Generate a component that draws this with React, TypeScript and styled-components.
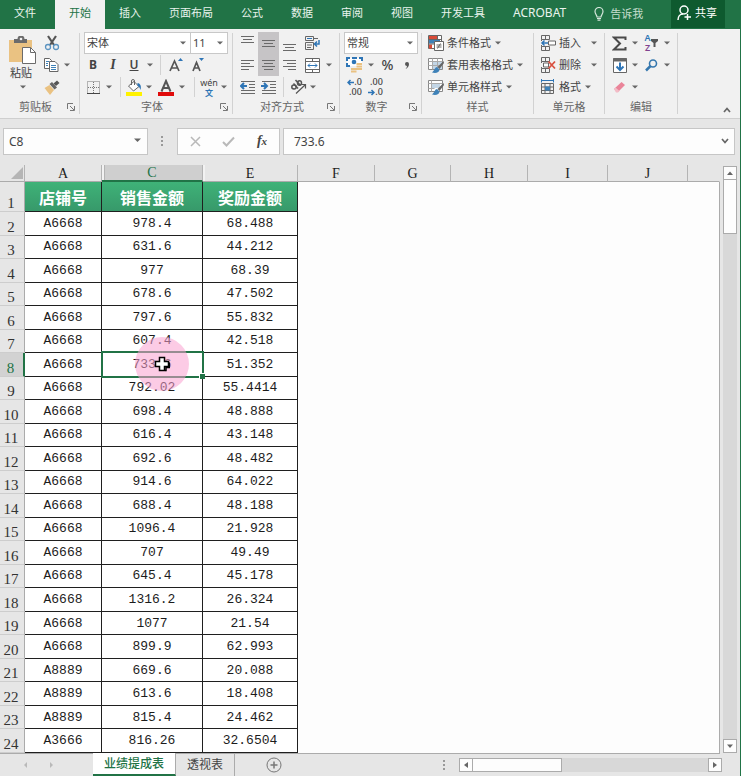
import React from "react";
import styled, { createGlobalStyle, css } from "styled-components";

const UI = `"Noto Sans", "Noto Sans CJK SC", sans-serif`;
const GREEN = "#217346";
const INK = "#444444";
const LINE = "#ababab";

const Global = createGlobalStyle`
  *, *::before, *::after { box-sizing: border-box; }
  body { margin: 0; background: #e6e6e6; color: ${INK}; font: 11px/16px ${UI}; }
  button, input, select { font: inherit; color: inherit; margin: 0; padding: 0; border: 0; background: none; border-radius: 0; }
  svg { display: block; flex: none; }
`;

const Window = styled.div`
  display: flex;
  flex-direction: column;
  height: 100vh;
  min-height: 640px;
  overflow: hidden;
`;

/* ---------- tab strip ---------- */
const TabStrip = styled.nav`
  display: flex;
  height: 29px;
  background: ${GREEN};
  color: #e9f3ed;
`;
const RibbonTab = styled.button<{ $active?: boolean; $file?: boolean; $latin?: boolean }>`
  height: 29px;
  padding: 0 14px 3px;
  white-space: nowrap;
  ${(p) => p.$file && css`width: 55px; padding-right: 19px;`}
  ${(p) => p.$latin && css`font-size: 12px;`}
  ${(p) => p.$active && css`background: #f1f1f1; color: ${GREEN};`}
`;
const TellMe = styled.button`
  display: flex;
  align-items: center;
  gap: 6px;
  margin-left: 14px;
  padding: 0 0 2px;
  color: #c5dece;
  white-space: nowrap;
`;
const Share = styled.button`
  display: flex;
  align-items: center;
  gap: 3px;
  height: 28px;
  margin: 0 16px 0 auto;
  padding: 0 8px 3px 6px;
  background: #0e5a2f;
  color: #ffffff;
  white-space: nowrap;
`;

/* ---------- ribbon ---------- */
const Framed = styled.div`
  display: flex;
  flex: 1;
  flex-direction: column;
  min-height: 0;
  border-right: 1px solid ${GREEN};
`;
const Ribbon = styled.div`
  display: flex;
  flex: none;
  height: 90px;
  background: #f1f1f1;
  border-bottom: 1px solid #cfcfcf;
`;
const Group = styled.section<{ $w: number }>`
  display: flex;
  flex: none;
  flex-direction: column;
  width: ${(p) => p.$w}px;
  padding: 3px 0 0 4px;
  background: linear-gradient(#d2d2d2, #d2d2d2) right 4px / 1px 81px no-repeat;
`;
const Tools = styled.div`
  display: flex;
  height: 65px;
`;
const Stack = styled.div`
  display: flex;
  flex-direction: column;
`;
const Row = styled.div`
  display: flex;
  align-items: center;
  height: 22px;
`;
const Tool = styled.button<{ $w?: number; $on?: boolean }>`
  display: flex;
  flex: none;
  align-items: center;
  justify-content: center;
  width: ${(p) => p.$w ?? 21}px;
  height: 22px;
  background: ${(p) => (p.$on ? "#c6c4c6" : "none")};
`;
const Letter = styled.span<{ $k: "b" | "i" | "u" | "sign" }>`
  font: 700 12px/16px "Noto Sans", sans-serif;
  ${(p) => p.$k === "i" && css`font: italic 700 14px/16px "Liberation Serif", serif;`}
  ${(p) => p.$k === "u" && css`font-weight: 600; text-decoration: underline;`}
  ${(p) => p.$k === "sign" && css`font-size: 14px; font-weight: 500;`}
`;
const Divider = styled.span<{ $w: number }>`
  width: ${(p) => p.$w}px;
  height: 20px;
  background: linear-gradient(#d2d2d2, #d2d2d2) center / 1px 100% no-repeat;
`;
const TextTool = styled.button<{ $w?: number }>`
  display: flex;
  align-items: center;
  gap: 2px;
  height: 22px;
  width: ${(p) => (p.$w ? `${p.$w}px` : "auto")};
  white-space: nowrap;
  & > svg:last-child { margin-left: ${(p) => (p.$w ? "auto" : "2px")}; }
`;
const IconSlot = styled.span`
  width: 19px;
  padding-left: 2px;
`;
const PasteButton = styled.button`
  display: flex;
  flex-direction: column;
  align-items: center;
  width: 37px;
  padding: 4px 0 0 1px;
  & > svg:last-child { margin-top: 4px; }
`;
const PasteLabel = styled.span`
  padding-right: 4px;
`;
const Caption = styled.div`
  display: grid;
  grid-template-columns: 1fr auto;
  align-items: center;
  height: 20px;
  padding-right: 5px;
  color: #666666;
  text-align: center;
`;
const Collapse = styled.button`
  align-self: flex-end;
  margin: 0 9px 5px auto;
`;
const Picker = styled.span<{ $w: number }>`
  display: grid;
  flex: none;
  align-items: center;
  width: ${(p) => p.$w}px;
  height: 22px;
  background: #ffffff;
  border: 1px solid #c8c8c8;
  & + & { border-left: 0; }
  & > select { grid-area: 1 / 1; height: 20px; padding-left: 2px; appearance: none; outline: none; }
  & > svg { grid-area: 1 / 1; justify-self: end; margin-right: 4px; pointer-events: none; }
`;

/* ---------- formula bar ---------- */
const FormulaBar = styled.div`
  display: flex;
  flex: none;
  align-items: center;
  height: 46px;
  padding: 0 5px 2px 3px;
  font-size: 12px;
`;
const Field = styled.div<{ $w?: number }>`
  display: flex;
  flex: ${(p) => (p.$w ? "none" : "1")};
  align-items: center;
  justify-content: space-between;
  width: ${(p) => (p.$w ? `${p.$w}px` : "auto")};
  height: 27px;
  padding: 0 5px;
  background: #fdfdfd;
  border: 1px solid #c6c6c6;
  & > input { flex: 1; min-width: 0; height: 24px; padding-left: ${(p) => (p.$w ? 0 : 5)}px; outline: none; }
`;
const Grip = styled.span<{ $w: number }>`
  display: flex;
  flex: none;
  justify-content: center;
  width: ${(p) => p.$w}px;
`;
const Fx = styled.span`
  font: italic 700 14px/16px "Liberation Serif", serif;
  & > small { font-size: 11px; }
`;

/* ---------- sheet ---------- */
const Work = styled.main`
  display: flex;
  flex: 1;
  min-height: 0;
`;
const Sheet = styled.div`
  flex: 1;
  min-width: 0;
`;
const Grid = styled.table`
  width: 100%;
  height: 100%;
  table-layout: fixed;
  border-collapse: separate;
  border-spacing: 0;
  color: #1c1c1c;
`;
const ColHead = styled.th<{ $on?: boolean; $last?: boolean }>`
  height: 17px;
  padding: 1px 0 0;
  border-right: 1px solid ${(p) => (p.$last ? "transparent" : "#b4b4b4")};
  border-bottom: 1px solid ${LINE};
  font: 400 14px/15px "Liberation Serif", serif;
  ${(p) => p.$on && css`
    background: #cfcfcf;
    color: ${GREEN};
    border-bottom: 2px solid ${GREEN};
    line-height: 14px;
    box-shadow: inset 2px 0 #f2f2f2, inset 3px 0 #b4b4b4, 2px 0 #f2f2f2;
  `}
`;
const Corner = styled.td`
  padding: 0;
  border-right: 1px solid #b4b4b4;
  border-bottom: 1px solid ${LINE};
  & > svg { margin-left: 11px; }
`;
const RowHead = styled.th<{ $on?: boolean }>`
  padding: 0 2px 0 0;
  vertical-align: bottom;
  border-right: 1px solid ${LINE};
  border-bottom: 1px solid #cdcdcd;
  font: 400 15px/16px "Liberation Serif", serif;
  color: #333333;
  ${(p) => p.$on && css`
    background: #d2d2d2;
    color: ${GREEN};
    border-right: 2px solid ${GREEN};
  `}
`;
const Title = styled.td`
  height: 30px;
  padding: 0;
  background: linear-gradient(#3fb278, #37996a);
  border-right: 1px solid #1f1f1f;
  border-bottom: 1px solid #1f1f1f;
  color: #ffffff;
  font: 700 16px/20px "Noto Sans CJK SC", sans-serif;
  text-align: center;
`;
const Cell = styled.td`
  position: relative;
  padding: 1px 0 0;
  background: #ffffff;
  border-right: 1px solid #1f1f1f;
  border-bottom: 1px solid #1f1f1f;
  font: 13px/20px "Liberation Mono", monospace;
  text-align: center;
`;
const Blank = styled.td`
  padding: 0;
  background: #fdfdfd;
  border-right: 1px solid ${LINE};
`;
const Selection = styled.span`
  position: absolute;
  z-index: 1;
  inset: -2px -2px -2px -1px;
  border: 2px solid ${GREEN};
  &::after {
    content: "";
    position: absolute;
    right: -3px;
    bottom: -3px;
    width: 6px;
    height: 6px;
    background: ${GREEN};
    border: 1px solid #ffffff;
    border-width: 1px 0 0 1px;
  }
`;
const Pointer = styled.span`
  position: absolute;
  z-index: 2;
  top: 50%;
  left: 60%;
  display: grid;
  place-items: center;
  width: 54px;
  height: 54px;
  margin: -27px;
  border-radius: 50%;
  background: rgba(250, 160, 208, 0.55);
`;

/* ---------- scroll bars and sheet tabs ---------- */
const VScroll = styled.div`
  display: flex;
  flex: none;
  flex-direction: column;
  width: 14px;
  margin: 1px 3px 0 3px;
  background: #d8d8d8;
`;
const HScroll = styled.div`
  display: flex;
  flex: none;
  width: 263px;
  height: 14px;
  margin-right: 18px;
  background: #d8d8d8;
`;
const Arrow = styled.button`
  display: grid;
  flex: none;
  place-items: center;
  width: 14px;
  height: 14px;
  background: #fdfdfd;
  border: 1px solid ${LINE};
`;
const Thumb = styled.div<{ $v?: boolean }>`
  background: #fdfdfd;
  border: 1px solid ${LINE};
  ${(p) => (p.$v ? css`height: 54px; border-top: 0;` : css`width: 89px; border-left: 0;`)}
`;
const Spring = styled.span`
  flex: 1;
`;
const Footer = styled.footer`
  display: flex;
  flex: none;
  align-items: center;
  height: 22px;
  font-size: 12px;
`;
const FooterLine = styled.div`
  flex: none;
  height: 1px;
  margin-right: 20px;
  background: ${LINE};
`;
const SheetNav = styled.div`
  display: flex;
  gap: 18px;
  width: 93px;
  padding-left: 22px;
`;
const SheetTab = styled.button<{ $active?: boolean }>`
  align-self: stretch;
  padding: 0 11px;
  white-space: nowrap;
  border-right: 1px solid ${LINE};
  ${(p) => p.$active && css`
    margin-top: -1px;
    background: #ffffff;
    color: ${GREEN};
    border-bottom: 2px solid ${GREEN};
    font-weight: 500;
  `}
`;
const AddSheet = styled.button`
  margin-left: 31px;
`;

/* ---------- drawings ---------- */
const Caret = () => (
  <svg width="6" height="4" viewBox="0 0 6 4"><path d="M0 .5h6L3 3.5z" fill="#666" /></svg>
);
const Triangle = ({ d, fill = "#666" }: { d: string; fill?: string }) => (
  <svg width="8" height="8" viewBox="0 0 8 8"><path d={d} fill={fill} /></svg>
);
const Launcher = () => (
  <svg width="8" height="8" viewBox="0 0 8 8" fill="none" stroke="#777"><path d="M.5 6V.5H6M3 3l4 4M7.500 3v4.500H3" /></svg>
);
const Lines = ({ rows, blue }: { rows: [number, number, number][]; blue?: string }) => (
  <svg width="16" height="16" viewBox="0 0 16 16" fill="none">
    {rows.map(([x, y, w]) => <path key={y} d={`M${x} ${y + 0.5}h${w}`} stroke="#6a6a6a" />)}
    {blue && <path d={blue} stroke="#2e75b6" strokeWidth="2" />}
  </svg>
);
const indentRows: [number, number, number][] = [[1, 2, 14], [9, 5, 6], [9, 8, 6], [1, 11, 14], [1, 14, 14]];
const Clipboard = () => (
  <svg width="28" height="29" viewBox="0 0 28 29">
    <path d="M0 4h23v22H0z" fill="#eac282" />
    <path d="M5 3h3.500a3.500 3.500 0 0 1 7 0H18v4H5z" fill="#6b6b6b" />
    <circle cx="12" cy="3" r="1.300" fill="#f1f1f1" />
    <path d="M13.500 11.500h8l5 5v11h-13z" fill="#fff" stroke="#6b6b6b" />
    <path d="M21.500 11.500v5h5" fill="none" stroke="#6b6b6b" />
  </svg>
);
const Scissors = () => (
  <svg width="16" height="16" viewBox="0 0 16 16" fill="none">
    <path d="M4 1 10 10M12 1 6 10" stroke="#555" strokeWidth="2.200" />
    <circle cx="4" cy="12" r="2.500" stroke="#5b93c0" strokeWidth="1.300" />
    <circle cx="12" cy="12" r="2.500" stroke="#5b93c0" strokeWidth="1.300" />
  </svg>
);
const Copy = () => (
  <svg width="16" height="16" viewBox="0 0 16 16" fill="#fff" stroke="#666">
    <path d="M1.500 1.500h5l2 2v8h-7z" />
    <path d="M6.500 4.500h5.500l3 3v7H6.500z" />
    <path d="M3 4.500h3M3 6.500h2M3 8.500h2M8 8.500h5M8 10.500h5M8 12.500h5" stroke="#3f82b8" />
  </svg>
);
const Brush = () => (
  <svg width="16" height="16" viewBox="0 0 16 16">
    <path d="M.5 9 5.500 6l4.500 5-4 5z" fill="#eac282" />
    <path d="M5.500 5 8 3l5 5.500-2.500 2z" fill="#666" />
    <path d="M9.500 4.500 13 1.500 15.500 4 12 7z" fill="#555" />
  </svg>
);
const GrowA = ({ down }: { down?: boolean }) => (
  <svg width="15" height="16" viewBox="0 0 15 16" fill="none">
    <path d={down ? "M2 14 5.500 5.500 9 14M3.500 11h4" : "M1 14 5.500 4 10 14M2.500 11h6"} stroke="#555" strokeWidth="1.700" />
    <path d={down ? "M8 1h5l-2.500 3z" : "M9 4h5l-2.500-3z"} fill="#2e75b6" />
  </svg>
);
const Borders = () => (
  <svg width="13" height="13" viewBox="0 0 13 13" fill="none" stroke="#777">
    <path d="M.5.5h12v12H.5zM6.500 1v11M1 6.500h11" strokeDasharray="1 1" />
    <path d="M0 12.500h13" stroke="#444" />
  </svg>
);
const Bucket = () => (
  <svg width="18" height="17" viewBox="0 0 18 17">
    <path d="M3.500 7 9 2.500l5 5L8.500 12z" fill="#fff" stroke="#666" />
    <path d="M6.500 6V2a1.500 1.500 0 0 1 3 0v4" fill="none" stroke="#666" />
    <path d="M12.500 4c3 .5 4 3 3 7-1-2-1-3.500-3-4z" fill="#2e75b6" />
    <path d="M1 13h16v4H1z" fill="#fff200" />
  </svg>
);
const FontColor = () => (
  <svg width="16" height="17" viewBox="0 0 16 17" fill="none">
    <path d="M3.500 12.500 8 2 12.500 12.500M5 9h6" stroke="#555" strokeWidth="2" />
    <path d="M0 13h16v4H0z" fill="#e00b0b" />
  </svg>
);
const PhoneticBox = styled.span`
  display: flex;
  flex-direction: column;
  align-items: center;
  font: 9px/10px ${UI};
  & > b { color: #2e75b6; font: 700 8px/9px "Noto Sans CJK SC", sans-serif; }
`;
const Wrap = () => (
  <svg width="16" height="16" viewBox="0 0 16 16" fill="none" stroke="#666">
    <path d="M1.500 1.500h8v4h-8zM1.500 7.500h8v7h-8zM9.500 3.500H14M3 10h5M3 12.500h4" />
    <path d="M3 3.500h5" stroke="#2e75b6" />
    <path d="M15 5v4h-4M13 6.500 10.500 9l2.500 2.500" stroke="#2e75b6" strokeWidth="1.500" />
  </svg>
);
const Merge = () => (
  <svg width="15" height="15" viewBox="0 0 15 15" fill="#fff" stroke="#666">
    <path d="M.5.500h14v14H.5zM.5 3.500h14M.5 11.500h14M7.500.5v3M7.500 11.500v3" />
    <path d="M3 7.500h9M5 5.500l-2 2 2 2M10 5.500l2 2-2 2" fill="none" stroke="#2e75b6" />
  </svg>
);
const Orientation = () => (
  <svg width="17" height="16" viewBox="0 0 17 16" fill="none" stroke="#555">
    <ellipse cx="4" cy="8" rx="2.200" ry="2" strokeWidth="1.500" /><path d="M3.500 4.500 8 9.500" strokeWidth="1.500" />
    <path d="M5.500 1 10.500 6.500" strokeWidth="1.500" /><ellipse cx="9.500" cy="4" rx="2" ry="2.200" strokeWidth="1.500" />
    <path d="M6 14.500 15 6M11.500 5.500h4V9.500" strokeWidth="1.200" />
  </svg>
);
const Currency = () => (
  <svg width="17" height="16" viewBox="0 0 17 16" fill="none">
    <path d="M1 1h15v8H1z" fill="#fff" />
    <path d="M1 4V1h3M13 1h3v3M1 6v3h3M6 1h5" stroke="#2e75b6" strokeWidth="2" />
    <circle cx="8" cy="5" r="2.300" fill="#2e75b6" />
    <path d="M10.500 7h5.500M10.500 9.500h5.500M5 12h5.500M5 14.500h5.500M10.500 12H16" stroke="#eac282" strokeWidth="1.800" />
  </svg>
);
const Comma = () => (
  <svg width="6" height="9" viewBox="0 0 6 9"><path d="M3 1a2 2 0 0 1 2 2c0 2.500-1.500 4-3.500 5C2.500 7 3 6 3 5a2 2 0 0 1 0-4z" fill="#555" /></svg>
);
const DecimalBox = styled.span`
  display: flex;
  flex-direction: column;
  font: 500 9px/10px "Noto Sans", sans-serif;
  & > span { display: flex; align-items: center; justify-content: flex-end; }
`;
const BlueArrow = ({ right }: { right?: boolean }) => (
  <svg width="7" height="7" viewBox="0 0 7 7" fill="none" stroke="#2e75b6" strokeWidth="1.500">
    <path d={right ? "M0 3.500h6M3.500 1 6 3.500 3.500 6" : "M7 3.500H1M3.500 1 1 3.500 3.500 6"} />
  </svg>
);
const Conditional = () => (
  <svg width="16" height="16" viewBox="0 0 16 16" fill="none" stroke="#666">
    <path d="M.5.5h13v13H.5z" fill="#fff" />
    <path d="M1 1h8v3H1zM1 9.500h3v4H1z" fill="#d94b38" stroke="none" />
    <path d="M1 5h11v3.500H1z" fill="#3f82b8" stroke="none" />
    <path d="M.5 4.500h13M.5 9h13M9.500.5v4" />
    <path d="M6.500 6.500h9v9h-9z" fill="#fff" /><path d="M8.500 10h5M8.500 12h5M12.500 8.500l-3 5" />
  </svg>
);
const TableStyle = ({ cell }: { cell?: boolean }) => (
  <svg width="16" height="16" viewBox="0 0 16 16" fill="none" stroke="#888">
    <path d="M.5 1.500h14v11H.5z" fill="#fff" />
    <path d={cell ? "M4 4h8v5H4z" : "M5 5h9v7H5z"} fill="#c3d6e6" stroke="none" />
    <path d={cell ? "M.5 4.500h14M3.500 1.500v11M.5 9.500h6" : "M.5 4.500h14M.5 8.500h14M4.500 1.500v11M9.500 1.500v11"} stroke="#aaa" />
    <path d="M15.500 4 9.500 10l2 2 4.500-6z" fill="#666" stroke="none" />
    <path d="M9 10c-2 0-2 3-5 5.500 4 1 7.500 0 7.500-3z" fill="#3f82b8" stroke="none" />
  </svg>
);
const CellsIcon = ({ kind }: { kind: "insert" | "delete" | "format" }) => (
  <svg width="16" height="16" viewBox="0 0 16 16" fill="none" stroke="#666">
    {kind === "format" ? (
      <>
        <path d="M1.500 4.500h12v10h-12zM1.500 8h12M1.500 11.500h12M5 4.500v10M10 4.500v10" />
        <path d="M5 7.500h5v4H5z" fill="#3f82b8" stroke="none" />
        <path d="M1.500 0v3.500M13.500 0v3.500M2 1.500h11" stroke="#2e75b6" />
      </>
    ) : (
      <>
        <path d="M1.500.5h8v4h-8zM5.500.5v4M1.500 11.500h8v4h-8zM5.500 11.500v4M1.500 4.500V6M1.500 10v1.500" />
        {kind === "insert" ? (
          <>
            <path d="M8.500 6h7v4h-7z" fill="#fff" />
            <path d="M8 8H1.500M4.500 5.500 2 8l2.500 2.500" stroke="#2e75b6" strokeWidth="1.500" />
          </>
        ) : (
          <>
            <path d="M3.500 6h5v4h-5z" fill="#fff" />
            <path d="M8.500 4.500l6.500 7M15 4.500l-6.500 7" stroke="#d9503f" strokeWidth="1.800" />
          </>
        )}
      </>
    )}
  </svg>
);
const Sigma = () => (
  <svg width="15" height="15" viewBox="0 0 15 15" fill="none" stroke="#4a4a4a" strokeWidth="2">
    <path d="M13.500 4V1.500H2L8 7.500l-6 6h11.500V11" />
  </svg>
);
const SortText = styled.span`
  display: flex;
  flex-direction: column;
  color: #2e75b6;
  font: 600 9px/10px "Noto Sans", sans-serif;
  & > i { color: #80428f; font-style: normal; }
`;
const Funnel = () => (
  <svg width="7" height="8" viewBox="0 0 7 8"><path d="M0 0h7v2L4.500 4v4h-2V4L0 2z" fill="#555" /></svg>
);
const Fill = () => (
  <svg width="14" height="15" viewBox="0 0 14 15" fill="none" stroke="#666">
    <path d="M.5.500h13v14H.5z" fill="#fff" /><path d="M0 2h14" strokeWidth="3" />
    <path d="M7 4.500V12M3.500 8.500 7 12l3.500-3.500" stroke="#2e75b6" strokeWidth="2" />
  </svg>
);
const Find = () => (
  <svg width="13" height="13" viewBox="0 0 13 13" fill="none" stroke="#3577ae">
    <circle cx="8" cy="4.500" r="3.500" strokeWidth="1.600" /><path d="M5.500 7 1 11.500" strokeWidth="2.500" />
  </svg>
);
const Eraser = () => (
  <svg width="13" height="13" viewBox="0 0 13 13"><path d="M1 8 8.500 1 12 4 5 11z" fill="#ea8499" /><path d="M1 8l1.500-1.500L6.500 10 5 11.500H3z" fill="#f3bcc7" /></svg>
);
const Bulb = () => (
  <svg width="10" height="14" viewBox="0 0 10 14" fill="none" stroke="#d5e6db" strokeWidth="1.200">
    <path d="M3 10C3 8 1 7 1 4.500a4 4 0 0 1 8 0C9 7 7 8 7 10zM3 11.500h4M3.500 13.200h3" />
  </svg>
);
const Person = () => (
  <svg width="15" height="16" viewBox="0 0 15 16" fill="none" stroke="#fff" strokeWidth="1.500">
    <circle cx="7" cy="5" r="4" /><path d="M1 15c0-3.500 2-6 5-6M10.500 9v6M7.500 12h6.500" />
  </svg>
);
const Dots = () => (
  <svg width="3" height="11" viewBox="0 0 3 11" fill="#999"><path d="M0 0h2v2H0zM0 4h2v2H0zM0 8h2v2H0z" /></svg>
);
const Cross = () => (
  <svg width="16" height="16" viewBox="0 0 16 16">
    <path d="M5.500 1.500h5v4h4v5h-4v4h-5v-4h-4v-5h4z" fill="#fff" stroke="#000" strokeWidth="1.500" />
    <path d="M11 14.500h1v-3h3.500v-5" fill="none" stroke="#000" strokeWidth="1.500" />
  </svg>
);
const Chevron = ({ up }: { up?: boolean }) => (
  <svg width="8" height="6" viewBox="0 0 8 6" fill="none" stroke="#666" strokeWidth="1.700">
    <path d={up ? "M1 5l3-3.500L7 5" : "M1 1l3 3.500L7 1"} />
  </svg>
);

/* ---------- data ---------- */
const records: [string, string, string][] = [
  ["A6668", "978.4", "68.488"], ["A6668", "631.6", "44.212"], ["A6668", "977", "68.39"],
  ["A6668", "678.6", "47.502"], ["A6668", "797.6", "55.832"], ["A6668", "607.4", "42.518"],
  ["A6668", "733.6", "51.352"], ["A6668", "792.02", "55.4414"], ["A6668", "698.4", "48.888"],
  ["A6668", "616.4", "43.148"], ["A6668", "692.6", "48.482"], ["A6668", "914.6", "64.022"],
  ["A6668", "688.4", "48.188"], ["A6668", "1096.4", "21.928"], ["A6668", "707", "49.49"],
  ["A6668", "645.4", "45.178"], ["A6668", "1316.2", "26.324"], ["A6668", "1077", "21.54"],
  ["A6668", "899.9", "62.993"], ["A8889", "669.6", "20.088"], ["A8889", "613.6", "18.408"],
  ["A8889", "815.4", "24.462"], ["A3666", "816.26", "32.6504"],
];
const SheetCol = styled.col<{ $w?: number }>`
  width: ${(p) => (p.$w ? `${p.$w}px` : "auto")};
`;
const colWidths = [25, 77, 101, 95, 77, 76, 77, 80, 80];
const ribbonTabs = ["插入", "页面布局", "公式", "数据", "审阅", "视图", "开发工具", "ACROBAT"];

const Drop = ({ w = 12, label }: { w?: number; label: string }) => (
  <Tool $w={w} aria-label={`${label}选项`}><Caret /></Tool>
);
const GroupCaption = ({ text, launch = true }: { text: string; launch?: boolean }) => (
  <Caption><span>{text}</span>{launch && <button aria-label={`${text}设置`}><Launcher /></button>}</Caption>
);

function RibbonArea() {
  return (
    <Ribbon>
      <Group $w={80}>
        <Tools>
          <PasteButton><Clipboard /><PasteLabel>粘贴</PasteLabel><Caret /></PasteButton>
          <Stack>
            <Row><Tool $w={22} aria-label="剪切"><Scissors /></Tool></Row>
            <Row><Tool $w={20} aria-label="复制"><Copy /></Tool><Drop label="复制" /></Row>
            <Row><Tool $w={22} aria-label="格式刷"><Brush /></Tool></Row>
          </Stack>
        </Tools>
        <GroupCaption text="剪贴板" />
      </Group>
      <Group $w={153}>
        <Tools>
          <Stack>
            <Row>
              <Picker $w={107}><select aria-label="字体"><option>宋体</option></select><Caret /></Picker>
              <Picker $w={37}><select aria-label="字号"><option>11</option></select><Caret /></Picker>
            </Row>
            <Row>
              <Tool $w={18} aria-label="加粗"><Letter $k="b">B</Letter></Tool>
              <Tool $w={22} aria-label="倾斜"><Letter $k="i">I</Letter></Tool>
              <Tool $w={20} aria-label="下划线"><Letter $k="u">U</Letter></Tool>
              <Drop label="下划线" /><Divider $w={8} />
              <Tool $w={24} aria-label="增大字号"><GrowA /></Tool>
              <Tool $w={20} aria-label="减小字号"><GrowA down /></Tool>
            </Row>
            <Row>
              <Tool $w={18} aria-label="边框"><Borders /></Tool><Drop w={14} label="边框" /><Divider $w={9} />
              <Tool $w={18} aria-label="填充颜色"><Bucket /></Tool><Drop label="填充颜色" />
              <Tool aria-label="字体颜色"><FontColor /></Tool><Drop label="字体颜色" /><Divider $w={12} />
              <Tool $w={18} aria-label="拼音"><PhoneticBox>wén<b>文</b></PhoneticBox></Tool><Drop label="拼音" />
            </Row>
          </Stack>
        </Tools>
        <GroupCaption text="字体" />
      </Group>
      <Group $w={107}>
        <Tools>
          <Stack>
            <Row>
              <Tool aria-label="顶端对齐"><Lines rows={[[1, 1, 13], [3, 4, 9], [1, 7, 13]]} /></Tool>
              <Tool $on aria-label="垂直居中"><Lines rows={[[1, 5, 13], [3, 8, 9], [1, 11, 13]]} /></Tool>
              <Tool aria-label="底端对齐"><Lines rows={[[1, 9, 13], [3, 12, 9], [1, 15, 13]]} /></Tool>
              <Tool $w={24} aria-label="自动换行"><Wrap /></Tool>
            </Row>
            <Row>
              <Tool aria-label="左对齐"><Lines rows={[[1, 3, 13], [1, 6, 9], [1, 9, 13], [1, 12, 8]]} /></Tool>
              <Tool $on aria-label="居中"><Lines rows={[[1, 3, 13], [3, 6, 9], [1, 9, 13], [3, 12, 9]]} /></Tool>
              <Tool aria-label="右对齐"><Lines rows={[[1, 3, 13], [5, 6, 9], [1, 9, 13], [6, 12, 8]]} /></Tool>
              <Tool $w={24} aria-label="合并后居中"><Merge /></Tool><Drop w={10} label="合并" />
            </Row>
            <Row>
              <Tool aria-label="减少缩进量"><Lines rows={indentRows} blue="M7 7H1M4 4 1 7l3 3" /></Tool>
              <Tool aria-label="增加缩进量"><Lines rows={indentRows} blue="M0 7h6M3 4l3 3-3 3" /></Tool>
              <Divider $w={8} />
              <Tool $w={22} aria-label="方向"><Orientation /></Tool><Drop w={8} label="方向" />
            </Row>
          </Stack>
        </Tools>
        <GroupCaption text="对齐方式" />
      </Group>
      <Group $w={82}>
        <Tools>
          <Stack>
            <Row><Picker $w={74}><select aria-label="数字格式"><option>常规</option></select><Caret /></Picker></Row>
            <Row>
              <Tool aria-label="会计数字格式"><Currency /></Tool><Drop label="货币" />
              <Tool aria-label="百分比样式"><Letter $k="sign">%</Letter></Tool>
              <Tool $w={18} aria-label="千位分隔样式"><Comma /></Tool>
            </Row>
            <Row>
              <Tool aria-label="增加小数位数"><DecimalBox><span><BlueArrow />.0</span><span>.00</span></DecimalBox></Tool>
              <Tool aria-label="减少小数位数"><DecimalBox><span>.00</span><span><BlueArrow right />.0</span></DecimalBox></Tool>
            </Row>
          </Stack>
        </Tools>
        <GroupCaption text="数字" />
      </Group>
      <Group $w={112}>
        <Tools>
          <Stack>
            <Row><TextTool><IconSlot><Conditional /></IconSlot>条件格式<Caret /></TextTool></Row>
            <Row><TextTool><IconSlot><TableStyle /></IconSlot>套用表格格式<Caret /></TextTool></Row>
            <Row><TextTool><IconSlot><TableStyle cell /></IconSlot>单元格样式<Caret /></TextTool></Row>
          </Stack>
        </Tools>
        <GroupCaption text="样式" launch={false} />
      </Group>
      <Group $w={71}>
        <Tools>
          <Stack>
            <Row><TextTool $w={59}><IconSlot><CellsIcon kind="insert" /></IconSlot>插入<Caret /></TextTool></Row>
            <Row><TextTool $w={59}><IconSlot><CellsIcon kind="delete" /></IconSlot>删除<Caret /></TextTool></Row>
            <Row><TextTool><IconSlot><CellsIcon kind="format" /></IconSlot>格式<Caret /></TextTool></Row>
          </Stack>
        </Tools>
        <GroupCaption text="单元格" launch={false} />
      </Group>
      <Group $w={73}>
        <Tools>
          <Stack>
            <Row>
              <Tool aria-label="求和"><Sigma /></Tool><Drop w={10} label="求和" />
              <Tool $w={22} aria-label="排序和筛选"><SortText>A<i>Z</i></SortText><Funnel /></Tool><Drop w={10} label="排序" />
            </Row>
            <Row>
              <Tool aria-label="填充"><Fill /></Tool><Drop w={10} label="填充" />
              <Tool $w={22} aria-label="查找"><Find /></Tool><Drop w={10} label="查找" />
            </Row>
            <Row><Tool aria-label="清除"><Eraser /></Tool><Drop w={10} label="清除" /></Row>
          </Stack>
        </Tools>
        <GroupCaption text="编辑" launch={false} />
      </Group>
      <Collapse aria-label="折叠功能区"><Chevron up /></Collapse>
    </Ribbon>
  );
}

function SheetGrid() {
  return (
    <Grid>
      <colgroup>{colWidths.map((w, i) => <SheetCol key={i} $w={w} />)}<SheetCol /></colgroup>
      <thead>
        <tr>
          <Corner><svg width="12" height="12" viewBox="0 0 12 12"><path d="M12 0v12H0z" fill="#b5b5b5" /></svg></Corner>
          {["A", "C", "E", "F", "G", "H", "I", "J"].map((c) => <ColHead key={c} scope="col" $on={c === "C"}>{c}</ColHead>)}
          <ColHead $last />
        </tr>
      </thead>
      <tbody>
        <tr>
          <RowHead scope="row">1</RowHead>
          <Title>店铺号</Title><Title>销售金额</Title><Title>奖励金额</Title>
          <Blank colSpan={6} />
        </tr>
        {records.map(([shop, sales, bonus], i) => {
          const on = i === 6;
          return (
            <tr key={i}>
              <RowHead scope="row" $on={on}>{i + 2}</RowHead>
              <Cell>{shop}</Cell>
              <Cell>{sales}{on && <><Selection /><Pointer><Cross /></Pointer></>}</Cell>
              <Cell>{bonus}</Cell>
              <Blank colSpan={6} />
            </tr>
          );
        })}
      </tbody>
    </Grid>
  );
}

export default function App() {
  return (
    <Window>
      <Global />
      <TabStrip>
        <RibbonTab $file>文件</RibbonTab>
        <RibbonTab $active>开始</RibbonTab>
        {ribbonTabs.map((t) => <RibbonTab key={t} $latin={t === "ACROBAT"}>{t}</RibbonTab>)}
        <TellMe><Bulb />告诉我</TellMe>
        <Share><Person />共享</Share>
      </TabStrip>
      <Framed>
        <RibbonArea />
        <FormulaBar>
          <Field $w={145}>
            <input aria-label="名称框" defaultValue="C8" />
            <button aria-label="名称列表"><Triangle d="M0 1.500h7L3.500 5z" /></button>
          </Field>
          <Grip $w={29}><Dots /></Grip>
          <Field $w={103}>
            <Tool $w={24} aria-label="取消"><svg width="11" height="11" viewBox="0 0 11 11"><path d="M1 1l9 9M10 1l-9 9" stroke="#b9b9b9" strokeWidth="1.500" /></svg></Tool>
            <Tool $w={24} aria-label="输入"><svg width="13" height="11" viewBox="0 0 13 11" fill="none"><path d="M1 6l3.500 3.500L12 1.500" stroke="#b9b9b9" strokeWidth="2" /></svg></Tool>
            <Tool $w={24} aria-label="插入函数"><Fx>f<small>x</small></Fx></Tool>
          </Field>
          <Grip $w={3} />
          <Field>
            <input aria-label="编辑栏" defaultValue="733.6" />
            <button aria-label="展开编辑栏"><Chevron /></button>
          </Field>
        </FormulaBar>
        <Work>
          <Sheet><SheetGrid /></Sheet>
          <VScroll>
            <Arrow aria-label="向上滚动"><Triangle d="M1 6h6L4 2.500z" /></Arrow>
            <Thumb $v />
            <Spring />
            <Arrow aria-label="向下滚动"><Triangle d="M1 2.500h6L4 6z" /></Arrow>
          </VScroll>
        </Work>
        <FooterLine />
        <Footer>
          <SheetNav>
            <button aria-label="上一张工作表"><Triangle d="M5 1v6L2 4z" fill="#b9b9b9" /></button>
            <button aria-label="下一张工作表"><Triangle d="M2 1v6l3-3z" fill="#b9b9b9" /></button>
          </SheetNav>
          <SheetTab $active>业绩提成表</SheetTab>
          <SheetTab>透视表</SheetTab>
          <AddSheet aria-label="新工作表">
            <svg width="16" height="16" viewBox="0 0 16 16" fill="none" stroke="#777"><circle cx="8" cy="8" r="7" /><path d="M8 4.500v7M4.500 8h7" strokeWidth="1.500" /></svg>
          </AddSheet>
          <Spring />
          <Grip $w={30}><Dots /></Grip>
          <HScroll>
            <Arrow aria-label="向左滚动"><Triangle d="M6 1v6L2 4z" /></Arrow>
            <Thumb />
            <Spring />
            <Arrow aria-label="向右滚动"><Triangle d="M2 1v6l4-3z" /></Arrow>
          </HScroll>
        </Footer>
      </Framed>
    </Window>
  );
}
